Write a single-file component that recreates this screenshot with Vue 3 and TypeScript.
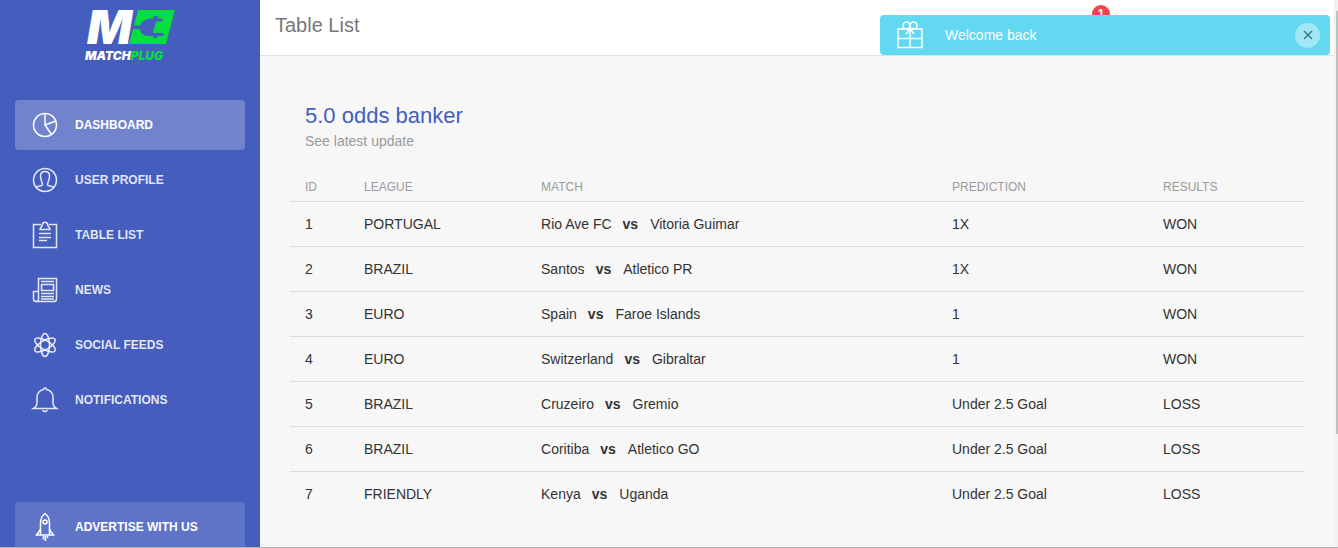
<script setup lang="ts">
import { ref } from 'vue'

interface NavItem {
  label: string
  icon: string
}
interface Match {
  id: number
  league: string
  home: string
  away: string
  prediction: string
  result: string
}

const navItems: NavItem[] = [
  { label: 'Dashboard', icon: 'pie' },
  { label: 'User Profile', icon: 'user' },
  { label: 'Table List', icon: 'clipboard' },
  { label: 'News', icon: 'news' },
  { label: 'Social Feeds', icon: 'atom' },
  { label: 'Notifications', icon: 'bell' },
]

const matches: Match[] = [
  { id: 1, league: 'PORTUGAL', home: 'Rio Ave FC', away: 'Vitoria Guimar', prediction: '1X', result: 'WON' },
  { id: 2, league: 'BRAZIL', home: 'Santos', away: 'Atletico PR', prediction: '1X', result: 'WON' },
  { id: 3, league: 'EURO', home: 'Spain', away: 'Faroe Islands', prediction: '1', result: 'WON' },
  { id: 4, league: 'EURO', home: 'Switzerland', away: 'Gibraltar', prediction: '1', result: 'WON' },
  { id: 5, league: 'BRAZIL', home: 'Cruzeiro', away: 'Gremio', prediction: 'Under 2.5 Goal', result: 'LOSS' },
  { id: 6, league: 'BRAZIL', home: 'Coritiba', away: 'Atletico GO', prediction: 'Under 2.5 Goal', result: 'LOSS' },
  { id: 7, league: 'FRIENDLY', home: 'Kenya', away: 'Uganda', prediction: 'Under 2.5 Goal', result: 'LOSS' },
]

const active = ref('Dashboard')
const toastOpen = ref(true)
</script>

<template>
  <div class="page">
    <aside class="sidebar">
      <a class="logo" href="#" aria-label="Matchplug home">
        <svg viewBox="0 0 100 60" width="100" height="60">
          <path fill="#06dd3f" d="M58 4H95L86 38H49Z" />
          <path fill="#455ebd" d="M52 19.500H60C62 15 66 12.500 73 12.500L74 10H78L77.500 12.500H83L82 15.500H76L73 27H84L83 30H78L77 32H73L73.500 30H69C64 30 60 27 60 23H51Z" />
          <text class="logo-m" x="7" y="38">M</text>
          <text class="logo-name" x="5" y="54">MATCH<tspan fill="#06dd3f">PLUG</tspan></text>
        </svg>
      </a>
      <nav class="nav">
        <a
          v-for="item in navItems"
          :key="item.label"
          href="#"
          class="nav-link"
          :class="{ active: active === item.label }"
          @click.prevent="active = item.label"
        >
          <svg class="icon" viewBox="0 0 30 30" aria-hidden="true">
            <g v-if="item.icon === 'pie'">
              <circle cx="15" cy="15" r="11.5" />
              <path d="M15 3.5V15L26 11M15 15L21.5 24.5" />
            </g>
            <g v-else-if="item.icon === 'user'">
              <circle cx="15" cy="15" r="11.5" />
              <path d="M6 22.500C8 20.500 12.500 21.500 12.500 19.500C12.500 17 10.500 16 10.500 11C10.500 7.500 12 6.500 15 6.500S19.500 7.500 19.500 11C19.500 16 17.500 17 17.500 19.500C17.500 21.500 22 20.500 24 22.500" />
            </g>
            <g v-else-if="item.icon === 'clipboard'">
              <path d="M11 4.500H3.500V27.500H26.500V4.500H19M9 13.500H21M9 17.500H21M9 20.500H17" />
              <path d="M10 9.500C10 7 12 7 12.500 4.500C12.500 1.500 17.500 1.500 17.500 4.500C18 7 20 7 20 9.500Z" />
            </g>
            <g v-else-if="item.icon === 'news'">
              <path d="M8.500 24V3.500H26.500V24C26.500 25.500 25.500 26.500 24 26.500H6C4.500 26.500 3.500 25.500 3.500 24V16.500H8.500M8.500 24C8.500 25.500 7.500 26.500 6 26.500M11 6.500H24M11.500 9.500H23.500V15.500H11.500ZM11 18.500H24M11 21.500H24M11 24H24" />
            </g>
            <g v-else-if="item.icon === 'atom'">
              <ellipse cx="15" cy="15" rx="4.500" ry="11.500" />
              <ellipse cx="15" cy="15" rx="4.500" ry="11.500" transform="rotate(60 15 15)" />
              <ellipse cx="15" cy="15" rx="4.500" ry="11.500" transform="rotate(120 15 15)" />
            </g>
            <g v-else>
              <path d="M13.500 4.500C13.500 2.500 16.500 2.500 16.500 4.500C20 5 23 8 23 12V18C23 20 24 22 26.500 23.500H3.500C6 22 7 20 7 18V12C7 8 10 5 13.500 4.500ZM13 25C13 27 17 27 17 25" />
            </g>
          </svg>
          <span>{{ item.label }}</span>
        </a>
      </nav>
      <a href="#" class="nav-link promo">
        <svg class="icon" viewBox="0 0 30 30" aria-hidden="true">
          <path d="M10.500 23V11C10.500 7 13 3 15 1.500C17 3 19.500 7 19.500 11V23M10.500 16.500C10 19.500 8 20.500 6.500 23H23.500C22 20.500 20 19.500 19.500 16.500M13.500 24V27.500M15.500 24V29M17.500 24V26" />
          <circle cx="15" cy="10" r="2" />
        </svg>
        <span>Advertise with us</span>
      </a>
    </aside>

    <main class="main">
      <header class="topbar">
        <h1>Table List</h1>
        <span class="badge">1</span>
      </header>
      <section class="content">
        <div class="heading">
          <h2>5.0 odds banker</h2>
          <p>See latest update</p>
        </div>
        <table>
          <colgroup>
            <col class="c-id" /><col class="c-league" /><col class="c-match" /><col class="c-prediction" /><col />
          </colgroup>
          <thead>
            <tr>
              <th>ID</th>
              <th>League</th>
              <th>Match</th>
              <th>Prediction</th>
              <th>Results</th>
            </tr>
          </thead>
          <tbody>
            <tr v-for="m in matches" :key="m.id">
              <td>{{ m.id }}</td>
              <td>{{ m.league }}</td>
              <td>{{ m.home }}<b>vs</b>{{ m.away }}</td>
              <td>{{ m.prediction }}</td>
              <td>{{ m.result }}</td>
            </tr>
          </tbody>
        </table>
      </section>
    </main>

    <div class="scroll-track" aria-hidden="true"><div class="scroll-thumb"></div></div>

    <div v-if="toastOpen" class="toast" role="status">
      <svg class="icon" viewBox="0 0 30 30" aria-hidden="true">
        <path d="M3 9H27V27.500H3ZM3 18.500H27M15 9V27.500M15 8.500L11 14M15 8.500L19 14" />
        <circle cx="11.500" cy="5.500" r="3.500" />
        <circle cx="18.500" cy="5.500" r="3.500" />
      </svg>
      <span>Welcome back</span>
      <button type="button" aria-label="Close" @click="toastOpen = false">
        <svg viewBox="0 0 10 10" width="10" height="10"><path d="M1 1L9 9M9 1L1 9" /></svg>
      </button>
    </div>
  </div>
</template>

<style>
body {
  margin: 0;
}
</style>

<style scoped>
.page {
  position: relative;
  display: flex;
  height: 100vh;
  box-sizing: border-box;
  overflow: hidden;
  border-bottom: 1px solid #b3b3b3;
  background: #f7f7f7;
  color: #333;
  font: 14px/20px "Liberation Sans", Arial, sans-serif;
}
.sidebar {
  display: flex;
  flex: 0 0 260px;
  flex-direction: column;
  box-sizing: border-box;
  padding: 6px 15px 0;
  background: #455ebd;
}
.logo {
  display: block;
  height: 60px;
  margin: 0 65px 34px;
}
.logo svg {
  display: block;
  overflow: visible;
}
.logo-m {
  fill: #fff;
  font: italic 900 47px Inter, sans-serif;
}
.logo-name {
  fill: #fff;
  font: italic 900 12px Inter, sans-serif;
}
.nav {
  display: flex;
  flex-direction: column;
  gap: 5px;
}
.nav-link {
  display: flex;
  flex: 0 0 50px;
  align-items: center;
  gap: 15px;
  box-sizing: border-box;
  height: 50px;
  padding: 0 15px;
  border-radius: 4px;
  color: rgba(255, 255, 255, 0.86);
  font-size: 12px;
  font-weight: bold;
  text-decoration: none;
  text-transform: uppercase;
}
.nav-link.active {
  background: rgba(255, 255, 255, 0.23);
  color: #fff;
}
.nav-link.promo {
  margin-top: 77px;
  background: rgba(255, 255, 255, 0.14);
  color: #fff;
}
.icon {
  flex: none;
  width: 30px;
  height: 30px;
  fill: none;
  stroke: currentColor;
  stroke-width: 1.5;
}
.main {
  flex: 1;
  min-width: 0;
}
.topbar {
  display: flex;
  justify-content: space-between;
  height: 55px;
  padding: 0 224px 0 15px;
  border-bottom: 1px solid #e0e0e0;
  background: #fff;
}
h1 {
  margin: 0;
  color: #777;
  font-size: 20px;
  font-weight: normal;
  line-height: 50px;
}
.badge {
  width: 18px;
  height: 18px;
  margin-top: 5px;
  border-radius: 9px;
  background: #fb404b;
  color: #fff;
  font-size: 12px;
  font-weight: bold;
  line-height: 18px;
  text-align: center;
}
.content {
  padding: 45px 30px 0;
}
.heading {
  padding: 0 15px;
}
h2 {
  margin: 0;
  color: #455ebd;
  font-size: 22px;
  font-weight: normal;
  line-height: 30px;
}
.heading p {
  margin: 0 0 20px;
  color: #9a9a9a;
}
table {
  width: 100%;
  border-collapse: separate;
  border-spacing: 0;
  table-layout: fixed;
}
.c-id {
  width: 5.82%;
}
.c-league {
  width: 17.46%;
}
.c-match {
  width: 40.53%;
}
.c-prediction {
  width: 20.81%;
}
th,
td {
  box-sizing: border-box;
  padding: 0 15px;
  text-align: left;
}
th {
  height: 30px;
  padding-top: 2px;
  color: #9a9a9a;
  font-size: 12px;
  font-weight: normal;
  text-transform: uppercase;
}
td {
  height: 45px;
  border-top: 1px solid #ddd;
}
td b {
  margin: 0 12px 0 11px;
}
.scroll-track {
  flex: 0 0 4px;
  box-sizing: border-box;
  padding: 11px 0 0 2px;
  background: #f1f1f1;
}
.scroll-thumb {
  height: 79%;
  background: #c1c1c1;
}
.toast {
  position: absolute;
  top: 15px;
  right: 8px;
  display: flex;
  align-items: center;
  box-sizing: border-box;
  width: 450px;
  height: 40px;
  padding: 0 10px 0 15px;
  border-radius: 4px;
  background: #63d8f1;
  color: #fff;
}
.toast span {
  flex: 1;
  margin-left: 20px;
}
.toast button {
  display: grid;
  place-items: center;
  width: 25px;
  height: 25px;
  padding: 0;
  border: 0;
  border-radius: 50%;
  background: rgba(255, 255, 255, 0.4);
  cursor: pointer;
}
.toast button svg {
  stroke: #3d7785;
  stroke-width: 1.5;
}
</style>
